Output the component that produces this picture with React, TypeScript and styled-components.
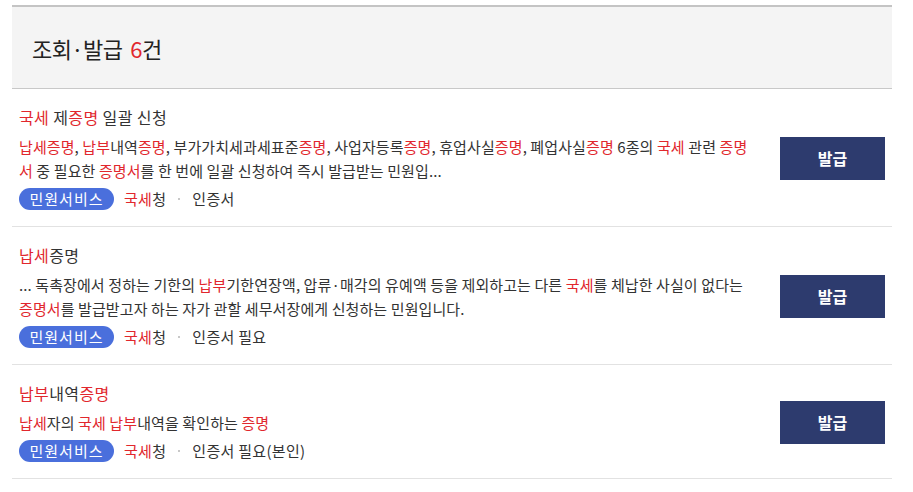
import React from "react";
import styled, { createGlobalStyle } from "styled-components";

const Global = createGlobalStyle`
  html, body { margin: 0; padding: 0; background: #fff; }
  body { font-family: "Noto Sans CJK KR", "Noto Sans", sans-serif; color: #333; }
`;

const Page = styled.div`
  padding: 5px 21px 0 12px;
`;

const Header = styled.div`
  border-top: 2px solid #c4c4c4;
  border-bottom: 1px solid #c8c8c8;
  background: #f4f4f4;
  height: 81px;
  display: flex;
  align-items: center;
  padding-left: 20px;
  font-size: 22px;
  color: #222;
  letter-spacing: -0.6px;
`;

const Count = styled.span`
  color: #e1272d;
  margin-left: 8px;
`;

const List = styled.div`
  display: flex;
  flex-direction: column;
`;

const Item = styled.div`
  display: flex;
  align-items: center;
  padding: 17px 7px 16px 7px;
  border-bottom: 1px solid #e2e2e2;
`;

const Body = styled.div`
  flex: 1;
  min-width: 0;
  padding-right: 30px;
  display: flex;
  flex-direction: column;
`;

const Title = styled.div`
  font-size: 16px;
  line-height: 22px;
  color: #333;
  letter-spacing: 0.4px;
`;

const Desc = styled.div`
  margin-top: 7px;
  font-size: 15px;
  line-height: 24px;
  color: #333;
  letter-spacing: 0.1px;
`;

const Hl = styled.span`
  color: #e1272d;
`;

const Tags = styled.div`
  margin-top: 5px;
  display: flex;
  align-items: center;
  font-size: 15px;
  line-height: 22px;
  color: #333;
  letter-spacing: 0.3px;
`;

const Badge = styled.span`
  display: inline-flex;
  align-items: center;
  justify-content: center;
  height: 22px;
  width: 95px;
  border-radius: 11px;
  background: #4a6fdc;
  color: #fff;
  font-size: 15px;
  letter-spacing: 1px;
  margin-right: 10px;
`;

const Dot = styled.span`
  width: 2px;
  height: 2px;
  background: #c8c8c8;
  margin: 0 12px;
`;

const Button = styled.button`
  flex: none;
  width: 105px;
  height: 43px;
  border: 0;
  background: #2d3b6e;
  color: #fff;
  font-family: "Noto Sans CJK KR", sans-serif;
  font-size: 16px;
  font-weight: 700;
  cursor: pointer;
`;

type Part = string | { h: string };
const render = (parts: Part[]) =>
  parts.map((p, i) =>
    typeof p === "string" ? <React.Fragment key={i}>{p}</React.Fragment> : <Hl key={i}>{p.h}</Hl>
  );

const items: { title: Part[]; desc: Part[]; auth: string }[] = [
  {
    title: [{ h: "국세" }, " 제", { h: "증명" }, " 일괄 신청"],
    desc: [
      { h: "납세증명" }, ", ", { h: "납부" }, "내역", { h: "증명" }, ", 부가가치세과세표준", { h: "증명" },
      ", 사업자등록", { h: "증명" }, ", 휴업사실", { h: "증명" }, ", 폐업사실", { h: "증명" }, " 6종의 ",
      { h: "국세" }, " 관련 ", { h: "증명" }, " ", { h: "서" }, " 중 필요한 ", { h: "증명서" },
      "를 한 번에 일괄 신청하여 즉시 발급받는 민원입...",
    ],
    auth: "인증서",
  },
  {
    title: [{ h: "납세" }, "증명"],
    desc: [
      "... 독촉장에서 정하는 기한의 ", { h: "납부" }, "기한연장액, 압류·매각의 유예액 등을 제외하고는 다른 ",
      { h: "국세" }, "를 체납한 사실이 없다는 ", { h: "증명서" }, "를 발급받고자 하는 자가 관할 세무서장에게 신청하는 민원입니다.",
    ],
    auth: "인증서 필요",
  },
  {
    title: [{ h: "납부" }, "내역", { h: "증명" }],
    desc: [{ h: "납세" }, "자의 ", { h: "국세" }, " ", { h: "납부" }, "내역을 확인하는 ", { h: "증명" }],
    auth: "인증서 필요(본인)",
  },
];

export default function App() {
  return (
    <>
      <Global />
      <Page>
        <Header>
          조회·발급<Count>6</Count>건
        </Header>
        <List>
          {items.map((it, i) => (
            <Item key={i}>
              <Body>
                <Title>{render(it.title)}</Title>
                <Desc>{render(it.desc)}</Desc>
                <Tags>
                  <Badge>민원서비스</Badge>
                  <Hl>국세</Hl>청
                  <Dot />
                  {it.auth}
                </Tags>
              </Body>
              <Button>발급</Button>
            </Item>
          ))}
        </List>
      </Page>
    </>
  );
}
